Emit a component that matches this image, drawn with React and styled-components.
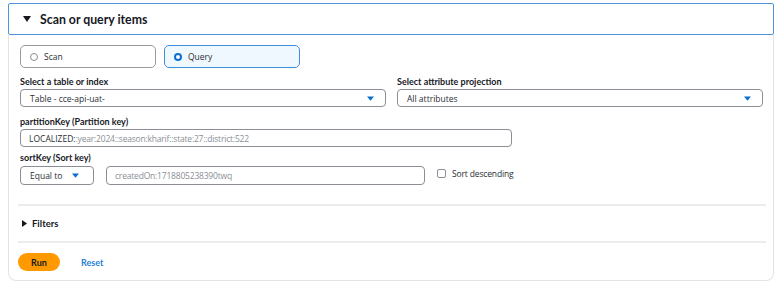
import React from 'react';
import styled, { createGlobalStyle } from 'styled-components';

const GlobalStyle = createGlobalStyle`
  html, body {
    margin: 0;
    padding: 0;
    background: #ffffff;
  }
  body {
    font-family: "Open Sans", "Noto Sans", Arial, sans-serif;
    color: #16191f;
  }
`;

const Page = styled.div`
  width: 766px;
  padding: 3px 6px 0 8px;
`;

const Header = styled.div`
  display: flex;
  align-items: center;
  gap: 9px;
  height: 30px;
  padding-left: 14px;
  border: 1px solid #4d94dc;
  border-radius: 2px;
`;

const Title = styled.h2`
  margin: 0;
  font-family: Lato, "Open Sans", sans-serif;
  font-size: 12.3px;
  font-weight: 700;
  color: #16191f;
`;

const Body = styled.div`
  border: 1px solid #e3e3e3;
  border-top: none;
  border-radius: 0 0 8px 8px;
  padding: 10px 7px 9px 9px;
`;

const Form = styled.div`
  padding: 0 3px 0 2px;
  display: flex;
  flex-direction: column;
`;

const TileRow = styled.div`
  display: flex;
  gap: 8px;
`;

const Tile = styled.div`
  display: flex;
  align-items: center;
  gap: 6px;
  box-sizing: border-box;
  width: 136px;
  height: 23px;
  padding-left: 9px;
  border: 1px solid ${p => (p.$active ? '#3f8fdc' : '#9a9a9a')};
  background: ${p => (p.$active ? '#f0f8ff' : '#ffffff')};
  border-radius: 5px;
  font-size: 8.5px;
  color: #2a2e33;
`;

const Radio = styled.span`
  box-sizing: border-box;
  width: 8px;
  height: 8px;
  border-radius: 50%;
  border: ${p => (p.$checked ? '2.5px solid #0a6fd1' : '1px solid #8c8c8c')};
  background: #fff;
`;

const Columns = styled.div`
  display: grid;
  grid-template-columns: 366px 366px;
  gap: 11px;
  margin-top: 7px;
`;

const Field = styled.div`
  display: flex;
  flex-direction: column;
`;

const Label = styled.div`
  font-family: Lato, "Open Sans", sans-serif;
  font-size: 9px;
  font-weight: 700;
  color: #16191f;
  height: 13px;
  line-height: 13px;
  margin-bottom: ${p => p.$gap || 0}px;
  margin-top: ${p => p.$top || 0}px;
`;

const Select = styled.div`
  box-sizing: border-box;
  display: flex;
  align-items: center;
  justify-content: space-between;
  flex-shrink: 0;
  width: ${p => p.$width || '100%'};
  height: ${p => p.$height || 18}px;
  padding: 0 ${p => p.$pr || 11}px 0 ${p => p.$pl || 9}px;
  border: 1px solid #8d8d95;
  border-radius: 4px;
  font-size: 8.5px;
  color: #2a2e33;
  background: #fff;
`;

const Caret = () => (
  <svg width="7" height="5" viewBox="0 0 7 5">
    <path d="M0 0.5 L7 0.5 L3.5 4.8 Z" fill="#0a6fd1" />
  </svg>
);

const Input = styled.div`
  box-sizing: border-box;
  display: flex;
  align-items: center;
  flex-shrink: 0;
  width: ${p => p.$width}px;
  height: ${p => p.$height || 18}px;
  padding-left: 8px;
  border: 1px solid #8d8d95;
  border-radius: 4px;
  font-size: 8.5px;
  color: #2a2e33;
  background: #fff;
  white-space: nowrap;
  overflow: hidden;
`;

const Faded = styled.span`
  color: #8a8f96;
  letter-spacing: -0.2px;
`;

const SortRow = styled.div`
  display: flex;
  align-items: center;
  gap: 12px;
`;

const CheckLabel = styled.label`
  display: flex;
  align-items: center;
  gap: 6px;
  font-size: 8.5px;
  letter-spacing: -0.15px;
  color: #2a2e33;
  margin-top: -5px;
`;

const Box = styled.span`
  box-sizing: border-box;
  width: 9px;
  height: 9px;
  border: 1px solid #8d8d95;
  border-radius: 2px;
`;

const Divider = styled.hr`
  margin: 0;
  border: none;
  border-top: 2px solid #ececec;
`;

const Section = styled.div`
  display: flex;
  align-items: center;
  gap: 5px;
  height: 35px;
  padding-left: 4px;
  font-family: Lato, "Open Sans", sans-serif;
  font-size: 9.5px;
  font-weight: 700;
`;

const Footer = styled.div`
  display: flex;
  align-items: center;
  gap: 21px;
  padding-top: 10px;
`;

const RunButton = styled.button`
  width: 42px;
  height: 18px;
  border: none;
  border-radius: 10px;
  background: #ff9900;
  color: #16191f;
  font-family: Lato, "Open Sans", sans-serif;
  font-size: 9px;
  font-weight: 700;
  padding: 0;
`;

const Link = styled.span`
  font-family: Lato, "Open Sans", sans-serif;
  font-size: 9px;
  font-weight: 700;
  color: #2a7fd4;
`;

const Triangle = ({ dir }) =>
  dir === 'down' ? (
    <svg width="8" height="6" viewBox="0 0 8 6">
      <path d="M0 0 L8 0 L4 6 Z" fill="#16191f" />
    </svg>
  ) : (
    <svg width="5" height="7" viewBox="0 0 5 7">
      <path d="M0 0 L5 3.5 L0 7 Z" fill="#16191f" />
    </svg>
  );

export default function App() {
  return (
    <Page>
      <GlobalStyle />
      <Header>
        <Triangle dir="down" />
        <Title>Scan or query items</Title>
      </Header>
      <Body>
        <Form>
          <TileRow>
            <Tile>
              <Radio />
              Scan
            </Tile>
            <Tile $active>
              <Radio $checked />
              Query
            </Tile>
          </TileRow>
          <Columns>
            <Field>
              <Label $gap={1}>Select a table or index</Label>
              <Select>
                Table - cce-api-uat-
                <Caret />
              </Select>
            </Field>
            <Field>
              <Label $gap={1}>Select attribute projection</Label>
              <Select>
                All attributes
                <Caret />
              </Select>
            </Field>
          </Columns>
          <Label $top={8} $gap={1}>partitionKey (Partition key)</Label>
          <Input $width={492}>
            LOCALIZED:<Faded>:year:2024::season:kharif::state:27::district:522</Faded>
          </Input>
          <Label $top={4} $gap={2}>sortKey (Sort key)</Label>
          <SortRow>
            <Select $width="74px" $height={19} $pr={14}>
              Equal to
              <Caret />
            </Select>
            <Input $width={319} $height={19}>
              <Faded>createdOn:1718805238390twq</Faded>
            </Input>
            <CheckLabel>
              <Box />
              Sort descending
            </CheckLabel>
          </SortRow>
        </Form>
        <div style={{ height: 19 }} />
        <Divider />
        <Section>
          <Triangle dir="right" />
          Filters
        </Section>
        <Divider />
        <Footer>
          <RunButton>Run</RunButton>
          <Link>Reset</Link>
        </Footer>
      </Body>
    </Page>
  );
}
